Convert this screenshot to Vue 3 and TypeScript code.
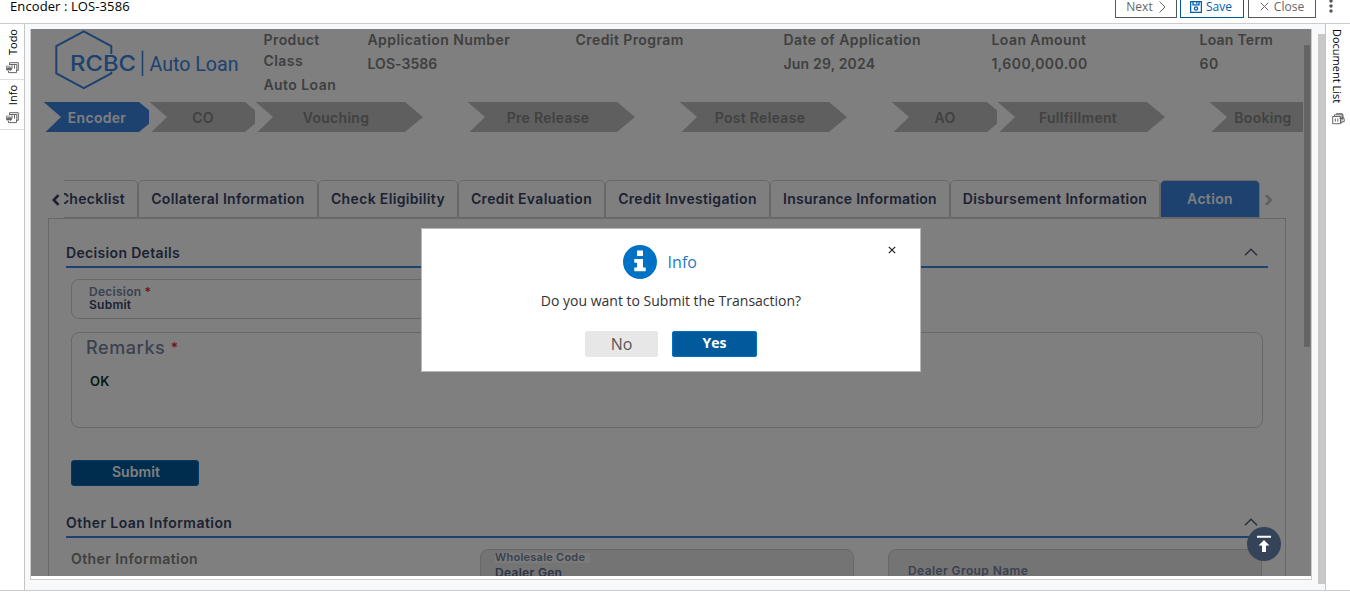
<script setup lang="ts">
interface Fact { label: string; value: string; cls?: string }
interface Step { label: string; wide?: boolean; active?: boolean }
interface Tab { label: string; width: number; cls?: string }

const facts: Fact[] = [
  { label: 'Product Class', value: 'Auto Loan', cls: 'first' },
  { label: 'Application Number', value: 'LOS-3586', cls: 'appno' },
  { label: 'Credit Program', value: '' },
  { label: 'Date of Application', value: 'Jun 29, 2024', cls: 'date' },
  { label: 'Loan Amount', value: '1,600,000.00' },
  { label: 'Loan Term', value: '60', cls: 'term' },
]
const steps: Step[] = [
  { label: 'Encoder', active: true },
  { label: 'CO' },
  { label: 'Vouching', wide: true },
  { label: 'Pre Release', wide: true },
  { label: 'Post Release', wide: true },
  { label: 'AO' },
  { label: 'Fullfillment', wide: true },
  { label: 'Booking' },
]
const tabs: Tab[] = [
  { label: 'Checklist', width: 74, cls: 'cut' },
  { label: 'Collateral Information', width: 180 },
  { label: 'Check Eligibility', width: 140 },
  { label: 'Credit Evaluation', width: 147 },
  { label: 'Credit Investigation', width: 165 },
  { label: 'Insurance Information', width: 180, cls: 'tight' },
  { label: 'Disbursement Information', width: 210 },
  { label: 'Action', width: 100, cls: 'active' },
]
const rail = ['Todo', 'Info']
</script>

<template>
  <div class="app">
    <header class="topbar">
      <div class="title">Encoder : LOS-3586</div>
      <div class="actions">
        <button class="tbtn next">Next
          <svg width="8" height="12" viewBox="0 0 8 12"><path d="M1.500 .5 7 6l-5.500 5.500" /></svg>
        </button>
        <button class="tbtn save">
          <svg width="12" height="12" viewBox="0 0 12 12"><path d="M.6.6h10.800v10.800H.6zM3 .6v3.300h6V.600M6.800 1.300v1.500" /><circle cx="6" cy="7.500" r="1.600" /></svg>Save
        </button>
        <button class="tbtn close">
          <svg width="9" height="9" viewBox="0 0 9 9"><path d="M.8.8l7.400 7.400M8.200.8.8 8.200" /></svg>Close
        </button>
        <svg class="kebab" width="4" height="14" viewBox="0 0 4 14"><circle cx="2" cy="2" r="1.700" /><circle cx="2" cy="7" r="1.700" /><circle cx="2" cy="12" r="1.700" /></svg>
      </div>
    </header>

    <div class="body">
      <aside class="rail">
        <div v-for="(r, i) in rail" :key="r" class="rail-item" :class="'r' + i">
          <span class="vtext up">{{ r }}</span>
          <svg class="ricon" width="13" height="12" viewBox="0 0 13 12"><path d="M3.500 3V.700h8.800v7.600H11M3.500 2.500h7.300v6M1.700 4H.7v4h1M2.500 8.800v1.800h8V8M6 3.200v3.300M8.500 3.200v3.300M3 3.500v2.500" /><path class="fill" d="M1 5.800h3.300V4.200L6.300 7 4.300 9.500V8.200H1z" /></svg>
        </div>
      </aside>

      <main class="main">
        <div class="frame">
          <div class="panel">
            <div class="content">
              <div class="head">
                <svg class="logo" width="190" height="61" viewBox="0 0 190 61">
                  <path d="M57.300 25V17L29.800 2.300 2.300 17v27.500L29.800 59.200l27.500-14.700v-2" />
                  <path class="thin" d="M88.500 21.500v25.500" />
                  <text class="brand" x="16" y="41.800" textLength="66" lengthAdjust="spacingAndGlyphs">RCBC</text>
                  <text class="sub" x="95.500" y="41.800" textLength="89" lengthAdjust="spacingAndGlyphs">Auto Loan</text>
                </svg>
                <div class="facts">
                  <div v-for="f in facts" :key="f.label" class="fact" :class="f.cls">
                    <div class="flabel">{{ f.label }}</div>
                    <div class="fvalue">{{ f.value }}</div>
                  </div>
                </div>
              </div>

              <div class="steps">
                <div v-for="s in steps" :key="s.label" class="cell" :class="{ wide: s.wide }">
                  <div class="step" :class="{ active: s.active }"><span>{{ s.label }}</span></div>
                </div>
              </div>

              <div class="tabs">
                <svg class="tarrow" width="16" height="14" viewBox="0 0 16 14"><path d="M10.500 2.200 5.800 7l4.700 4.800" /></svg>
                <div v-for="t in tabs" :key="t.label" class="tab" :class="t.cls" :style="{ width: t.width + 'px' }"><span>{{ t.label }}</span></div>
                <svg class="tarrow off" width="16" height="14" viewBox="0 0 16 14"><path d="M6 2.200 10.700 7 6 11.800" /></svg>
              </div>

              <div class="sheet">
                <div class="section">
                  <span>Decision Details</span>
                  <svg width="14" height="8" viewBox="0 0 14 8"><path d="M1 7.300 7 1.300l6 6" /></svg>
                </div>
                <div class="box decision">
                  <div class="lab">Decision <i>*</i></div>
                  <div class="val">Submit</div>
                </div>
                <div class="box remarks">
                  <div class="lab">Remarks <i>*</i></div>
                  <div class="val">OK</div>
                </div>
                <button class="submit">Submit</button>
                <div class="section other">
                  <span>Other Loan Information</span>
                  <svg width="14" height="8" viewBox="0 0 14 8"><path d="M1 7.300 7 1.300l6 6" /></svg>
                </div>
                <div class="row">
                  <div class="oi">Other Information</div>
                  <div class="box grey"><div class="lab hl">Wholesale Code</div><div class="val">Dealer Gen</div></div>
                  <div class="box grey dg"><div class="lab">Dealer Group Name</div></div>
                </div>
              </div>
            </div>
            <div class="thumb"></div>
            <div class="shade"></div>
          </div>
        </div>
        <div class="outer-thumb"></div>
      </main>

      <aside class="rail right">
        <span class="vtext">Document List</span>
        <svg class="ricon" width="13" height="12" viewBox="0 0 13 12"><path d="M.7 3.500h7.800v7.200H.7zM2.500 3.300V1.800h7.700v1.500M10 7.500v2.300H8.500M4.500 1.600V.700h6l.8 3M12.200 5.500v3.300h-2M3.300 5.500v3.200M5.800 5.500v3.200" /><path class="fill" d="M7.500 4.500h2V2.500L12.500 5 9.500 7.500V6h-2z" /></svg>
      </aside>
    </div>

    <div class="dialog">
      <svg class="x" width="8" height="8" viewBox="0 0 8 8"><path d="M.8.8l6.400 6.400M7.200.8.8 7.200" /></svg>
      <div class="dhead">
        <svg width="34" height="34" viewBox="0 0 34 34"><circle cx="17" cy="17" r="17" /><path d="M14 5.500h6v5.500h-6zM11.300 14H20v8.500h2.700v3.700H11.300v-3.700H14v-4.700h-2.700z" /></svg>
        <span>Info</span>
      </div>
      <p>Do you want to Submit the Transaction?</p>
      <div class="dbtns"><button class="no">No</button><button class="yes">Yes</button></div>
    </div>

    <button class="fab"><svg width="16" height="18" viewBox="0 0 16 18"><path d="M1 .8h14v2H1zM8 5l5.500 5.500H10V17H6v-6.500H2.500z" /></svg></button>
  </div>
</template>

<style>
body { margin: 0; background: #fff; overflow: hidden; }
</style>
<style scoped>
* { box-sizing: border-box; }
button { font: inherit; padding: 0; }
svg { display: block; flex: none; }
.app { position: relative; width: 1350px; height: 602px; overflow: hidden; background: #fff; font-family: "Open Sans", sans-serif; }
.topbar { height: 24px; border-bottom: 1px solid #ccc; display: flex; justify-content: space-between; }
.title { padding-left: 10px; font-size: 13px; letter-spacing: .1px; line-height: 13px; color: #000; white-space: nowrap; }
.actions { display: flex; align-items: flex-start; padding-right: 17px; }
.tbtn { height: 24px; margin-top: -6px; border: 1px solid #58585a; background: #fff; color: #666; font-size: 12px; display: flex; align-items: center; justify-content: center; line-height: 22px; padding-top: 1px; }
.tbtn svg { fill: none; stroke: currentColor; stroke-width: 1; }
.next { width: 62px; gap: 5px; margin-right: 3px; }
.save { width: 64px; gap: 4px; margin-right: 4px; color: #0061ad; border-color: #005a9c; padding-right: 2px; }
.save svg { stroke-width: 1.300; }
.close { width: 68px; gap: 5px; margin-right: 13px; }
.kebab { fill: #555; margin-top: -1px; }
.body { height: 567px; display: grid; grid-template-columns: 25px 1300px 25px; border-bottom: 1px solid #ccc; }
.rail { border-right: 1px solid #c6c6c6; }
.rail-item { display: flex; flex-direction: column; align-items: center; border-bottom: 1px solid #ddd; padding-top: 5px; }
.r0 { height: 56px; }
.r1 { height: 50px; }
.vtext { writing-mode: vertical-rl; font-size: 11px; line-height: 14px; color: #000; }
.up { transform: rotate(180deg); }
.rail-item .vtext { padding-right: 1px; }
.ricon { margin-top: 7px; fill: none; stroke: #666; stroke-width: 1; }
.ricon .fill { fill: #666; stroke: none; }
.right { border-right: 0; border-left: 1px solid #c6c6c6; display: flex; flex-direction: column; align-items: center; padding-top: 5px; }
.right .ricon { margin-top: 10px; }
.right .vtext { padding-right: 2px; }
.main { background: #f8f9fb; padding: 5px 0 0 5px; display: flex; gap: 6px; }
.frame { width: 1282px; height: 551px; border: 1px solid #ccc; border-top: 0; background: #fff; }
.outer-thumb { width: 7px; height: 550px; margin-top: 5px; background: #c8c8c8; }
.panel { position: relative; width: 1280px; height: 547px; overflow: hidden; display: flex; background: #fff; font-family: Inter, sans-serif; font-weight: 600; font-size: 14px; letter-spacing: .43px; }
.content { width: 1272px; height: 547px; overflow: hidden; flex: none; }
.thumb { width: 6px; height: 302px; margin: 16px 0 0 1px; background: #c8c8c8; }
.shade { position: absolute; inset: 0; background: rgba(0, 0, 0, .5); }
.head { height: 73px; display: flex; padding-left: 22.500px; }
.logo { letter-spacing: 0; }
.logo path { fill: none; stroke: #3a84e0; stroke-width: 2; }
.logo .thin { stroke-width: 1.600; }
.logo text { fill: #3a84e0; }
.brand { font: 500 21px Inter, sans-serif; }
.sub { font: 400 20px Roboto, sans-serif; }
.facts { display: grid; grid-template-columns: 104px repeat(5, 208px); padding-left: 20px; color: #808080; }
.fact { line-height: 21px; white-space: nowrap; display: flex; flex-direction: column; gap: 3px; }
.first .flabel { width: 64px; white-space: normal; }
.appno .fvalue { letter-spacing: .05px; }
.date .fvalue { letter-spacing: .18px; }
.term .flabel { letter-spacing: .25px; }
.steps { display: flex; height: 30px; padding-left: 12px; letter-spacing: .3px; }
.cell { width: 106px; height: 30px; overflow: hidden; flex: none; }
.cell.wide { width: 212px; }
.step { width: 115px; height: 30px; background: #bfbfbf; color: #828282; line-height: 32px; text-align: center; clip-path: polygon(.6px 0, 96px 0, 114px 15px, 96px 30px, 2.500px 30px, 18px 15px); }
.step span { display: block; width: 108px; }
.wide .step { width: 169px; clip-path: polygon(.6px 0, 150px 0, 168px 15px, 150px 30px, 2.500px 30px, 18px 15px); }
.wide .step span { width: 162px; }
.step.active { background: #3a84e0; color: #fff; }
.tabs { display: flex; height: 37px; margin: 48px 0 0 17px; letter-spacing: .34px; }
.tab { height: 38px; border: 1px solid #d0d0d0; border-radius: 5px 5px 0 0; text-align: center; line-height: 35px; color: #384466; flex: none; white-space: nowrap; }
.tab.cut { border-left: 0; border-top-left-radius: 0; overflow: hidden; display: flex; justify-content: flex-end; padding-right: 12px; }
.tab.tight { letter-spacing: .24px; }
.tab.active { background: #3a84e0; color: #fff; }
.tarrow { fill: none; stroke: #384058; stroke-width: 2.600; margin-top: 13px; }
.tarrow.off { stroke: #b8bcc6; }
.sheet { margin-left: 17px; width: 1238px; height: 400px; border: 1px solid #d0d0d0; padding: 20px 17px 0; color: #384466; margin-top: 1px; }
.section { height: 29px; border-bottom: 2px solid #3a84e0; display: flex; justify-content: space-between; line-height: 28px; letter-spacing: .33px; }
.section svg { fill: none; stroke: #525a70; stroke-width: 1.400; margin: 9px 10.500px 0 0; }
.section.other { letter-spacing: .45px; }
.box { border: 1px solid #d0d0d0; border-radius: 8px; margin-left: 5px; }
.decision { width: 375px; height: 40px; margin-top: 11px; padding: 5px 17px; line-height: 13px; font-size: 12px; letter-spacing: .25px; }
.lab { color: #74839f; }
.lab i { color: #e03020; font-style: normal; }
.remarks { width: 1192px; height: 96px; margin-top: 13px; padding: 4px 14px; }
.remarks .lab { font-size: 18px; font-weight: 500; line-height: 22px; letter-spacing: .6px; }
.remarks .lab i { font-size: 14px; position: relative; top: -1px; }
.remarks .val { font-size: 13px; margin: 12px 0 0 4px; line-height: 18px; color: #06382c; letter-spacing: .2px; }
.submit { display: block; width: 128px; height: 26px; margin: 33px 0 0 5px; margin-top: 32px; background: #00599c; border: 1px solid #0072c6; border-radius: 3px; color: #fff; line-height: 22px; padding: 0 0 2px 2px; letter-spacing: .1px; }
.other { margin-top: 23px; }
.row { display: grid; grid-template-columns: 409px 408px 380px; margin-top: 11px; }
.oi { color: #808080; margin-left: 5px; line-height: 20px; }
.grey { background: #e8e8e8; height: 45px; width: 374px; font-size: 12px; padding: 3px 14px; }
.hl { background: #f6f6f6; width: 95px; height: 10px; line-height: 9px; font-size: 11px; white-space: nowrap; letter-spacing: .25px; }
.grey .val { line-height: 20px; color: #5c6a88; letter-spacing: .3px; }
.dg { padding: 13px 19px; letter-spacing: .4px; }
.dialog { position: absolute; left: 421px; top: 228px; width: 500px; height: 144px; background: #fff; border: 1px solid #b8b8b8; }
.x { position: absolute; right: 24px; top: 17px; stroke: #222; stroke-width: 1.200; }
.dhead { display: flex; justify-content: center; align-items: center; gap: 10.500px; margin-top: 16px; padding-right: 22px; font-size: 16px; color: #2a78c4; }
.dhead circle { fill: #0072c6; }
.dhead path { fill: #fff; }
p { margin: 12px 0 0; text-align: center; font-size: 14px; line-height: 20px; color: #333; }
.dbtns { display: flex; justify-content: center; gap: 14px; margin-top: 20px; }
.no { width: 73px; height: 26px; border: 0; border-radius: 2px; background: #e7e7e7; font-size: 16px; color: #555; line-height: 26px; }
.yes { width: 85px; height: 26px; border: 1px solid #0072c6; border-radius: 2px; background: #005a9c; color: #fff; font-size: 14px; font-weight: 700; line-height: 22px; padding-bottom: 2px; }
.fab { position: absolute; left: 1247px; top: 527px; width: 34px; height: 34px; border: 0; border-radius: 50%; background: #344358; display: flex; align-items: center; justify-content: center; }
.fab svg { fill: #fff; }
</style>
